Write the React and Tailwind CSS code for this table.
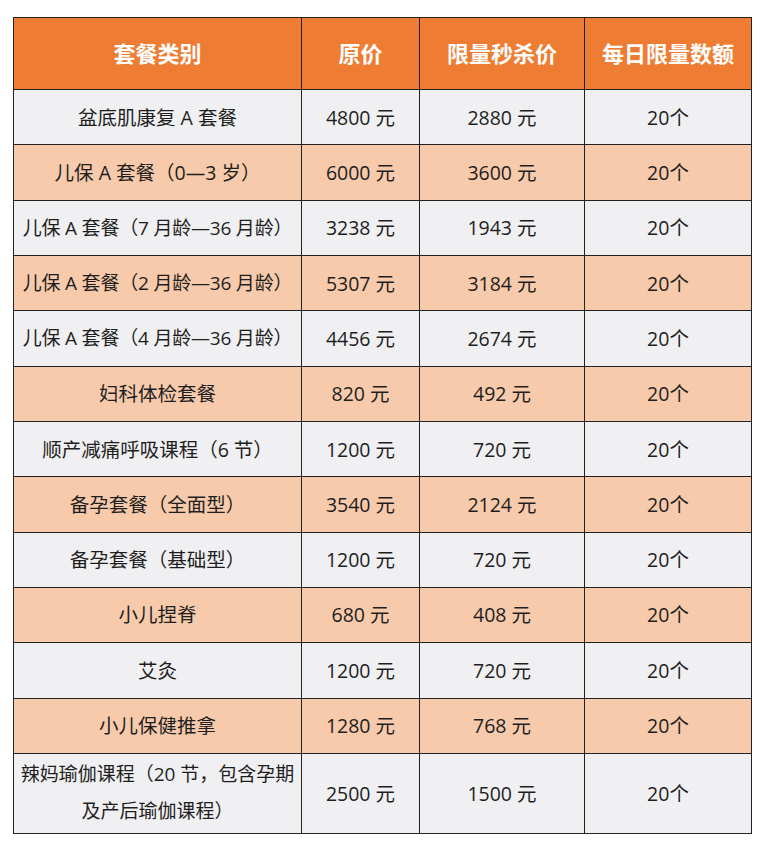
import React from "react";

const rows = [
  ["盆底肌康复 A 套餐", "4800 元", "2880 元"],
  ["儿保 A 套餐（0—3 岁）", "6000 元", "3600 元"],
  ["儿保 A 套餐（7 月龄—36 月龄）", "3238 元", "1943 元", true],
  ["儿保 A 套餐（2 月龄—36 月龄）", "5307 元", "3184 元", true],
  ["儿保 A 套餐（4 月龄—36 月龄）", "4456 元", "2674 元", true],
  ["妇科体检套餐", "820 元", "492 元"],
  ["顺产减痛呼吸课程（6 节）", "1200 元", "720 元"],
  ["备孕套餐（全面型）", "3540 元", "2124 元"],
  ["备孕套餐（基础型）", "1200 元", "720 元"],
  ["小儿捏脊", "680 元", "408 元"],
  ["艾灸", "1200 元", "720 元"],
  ["小儿保健推拿", "1280 元", "768 元"],
];

const App = () => {
  return (
    <main
      className="w-[764px] h-[848px] bg-white pt-[17px] pl-[13px]"
      style={{ fontFamily: '"Open Sans", "Noto Sans CJK SC", sans-serif' }}
    >
      <table className="border-collapse w-[738px] table-fixed text-[19.5px] text-[#1e1e1e]">
        <colgroup>
          <col className="w-[288px]" />
          <col className="w-[118px]" />
          <col className="w-[165px]" />
          <col className="w-[167px]" />
        </colgroup>
        <thead>
          <tr className="h-[72px] bg-[#ee7d33] text-white text-[22px] font-bold">
            <th className="border border-[#222]">套餐类别</th>
            <th className="border border-[#222]">原价</th>
            <th className="border border-[#222]">限量秒杀价</th>
            <th className="border border-[#222]">每日限量数额</th>
          </tr>
        </thead>
        <tbody>
          {rows.map((r, i) => (
            <tr
              key={i}
              className={
                i % 2 === 0
                  ? "h-[55.33px] bg-[#f0f0f2]"
                  : "h-[55.33px] bg-[#f7caab]"
              }
            >
              <td
                className={
                  r[3]
                    ? "border border-[#222] text-center whitespace-nowrap text-[19px] tracking-[-0.2px]"
                    : "border border-[#222] text-center whitespace-nowrap"
                }
              >
                {r[0]}
              </td>
              <td className="border border-[#222] text-center">{r[1]}</td>
              <td className="border border-[#222] text-center">{r[2]}</td>
              <td className="border border-[#222] text-center">20个</td>
            </tr>
          ))}
          <tr className="h-[80px] bg-[#f0f0f2]">
            <td className="border border-[#222] text-center leading-[37px] whitespace-nowrap text-[19px]">
              辣妈瑜伽课程（20 节，包含孕期
              <br />
              及产后瑜伽课程）
            </td>
            <td className="border border-[#222] text-center">2500 元</td>
            <td className="border border-[#222] text-center">1500 元</td>
            <td className="border border-[#222] text-center">20个</td>
          </tr>
        </tbody>
      </table>
    </main>
  );
};

export default App;
